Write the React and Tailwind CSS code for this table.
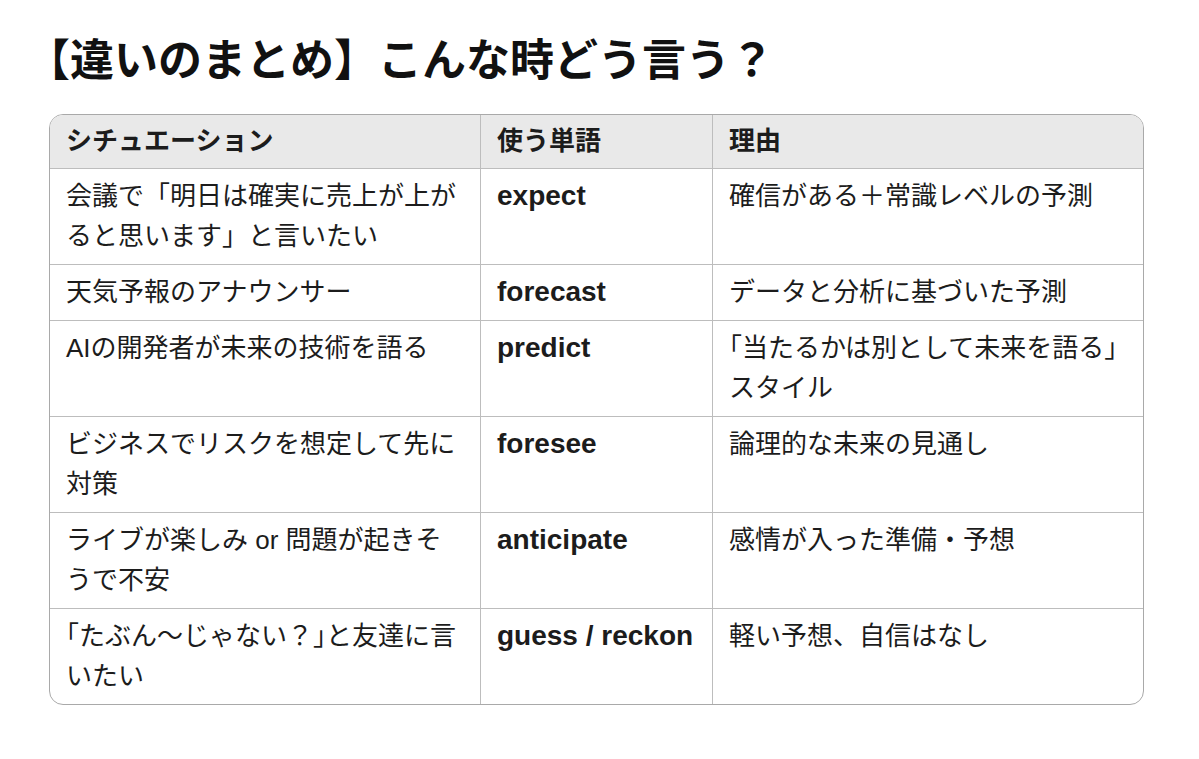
const rows = [
  {
    situation: ['会議で「明日は確実に売上が上が', 'ると思います」と言いたい'],
    word: 'expect',
    reason: ['確信がある＋常識レベルの予測'],
  },
  {
    situation: ['天気予報のアナウンサー'],
    word: 'forecast',
    reason: ['データと分析に基づいた予測'],
  },
  {
    situation: ['AIの開発者が未来の技術を語る'],
    word: 'predict',
    reason: [
      <>
        <span className="-ml-[0.5em]">「</span>当たるかは別として未来を語る」
      </>,
      'スタイル',
    ],
  },
  {
    situation: ['ビジネスでリスクを想定して先に', '対策'],
    word: 'foresee',
    reason: ['論理的な未来の見通し'],
  },
  {
    situation: ['ライブが楽しみ or 問題が起きそ', 'うで不安'],
    word: 'anticipate',
    reason: ['感情が入った準備・予想'],
  },
  {
    situation: [
      <>
        <span className="-ml-[0.5em]">「</span>たぶん〜じゃない？<span className="tracking-[-0.5em]">」</span>と友達に言
      </>,
      'いたい',
    ],
    word: 'guess / reckon',
    reason: ['軽い予想、自信はなし'],
  },
];

const font = { fontFamily: '"Liberation Sans", "Noto Sans CJK JP", sans-serif' };

function Lines({ lines }) {
  return lines.map((line, i) => (
    <div key={i} className="whitespace-nowrap">
      {line}
    </div>
  ));
}

export default function App() {
  return (
    <div className="min-h-screen bg-white text-[#1c1c1c]" style={font}>
      <h1 className="ml-[48px] pt-[36px] text-[44px] leading-[50px] font-bold text-[#111] [text-spacing-trim:trim-start]">
        【違いのまとめ】こんな時どう言う？
      </h1>

      <div className="ml-[49px] mt-[28px] w-[1095px] rounded-[14px] border border-[#a9a9a9] overflow-hidden">
        <div className="grid grid-cols-[431px_232px_430px] text-[26px] leading-[40px]">
          <div className="bg-[#e9e9e9] border-r border-b border-[#bdbdbd] px-4 pt-[6px] pb-[7px] font-bold">シチュエーション</div>
          <div className="bg-[#e9e9e9] border-r border-b border-[#bdbdbd] px-4 pt-[6px] pb-[7px] font-bold">使う単語</div>
          <div className="bg-[#e9e9e9] border-b border-[#bdbdbd] px-4 pt-[6px] pb-[7px] font-bold">理由</div>

          {rows.map((row, i) => {
            const last = i === rows.length - 1;
            return [
              <div key={`s${i}`} className={`border-r border-[#bdbdbd] px-4 pt-[7px] pb-[8px] ${last ? '' : 'border-b'}`}>
                <Lines lines={row.situation} />
              </div>,
              <div key={`w${i}`} className={`border-r border-[#bdbdbd] px-4 pt-[7px] pb-[8px] text-[28px] font-bold ${last ? '' : 'border-b'}`}>
                {row.word}
              </div>,
              <div key={`r${i}`} className={`border-[#bdbdbd] px-4 pt-[7px] pb-[8px] ${last ? '' : 'border-b'}`}>
                <Lines lines={row.reason} />
              </div>,
            ];
          })}
        </div>
      </div>
    </div>
  );
}
